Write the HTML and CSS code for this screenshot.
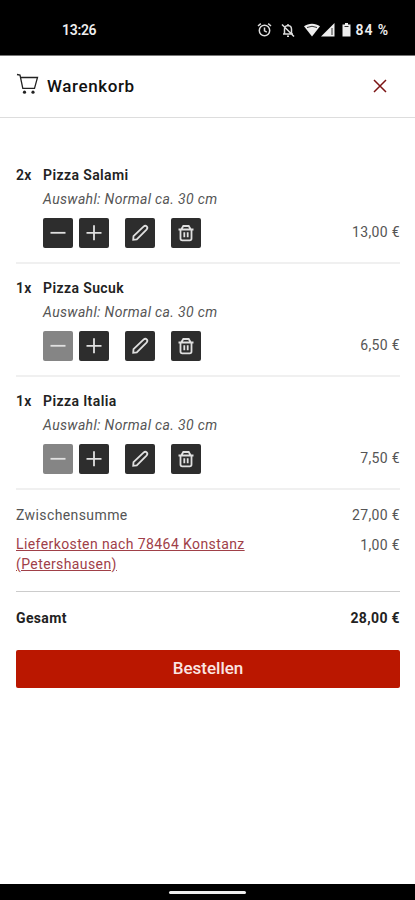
FILE: index.html
```
<!DOCTYPE html>
<html lang="de">
<head>
    <meta charset="UTF-8">
    <meta name="viewport" content="width=device-width, initial-scale=1.0">
    <title>Warenkorb</title>
    <link rel="stylesheet" href="styles.css">
</head>
<body>
    <!-- Icons used by every cart item -->
    <svg class="icon-defs" width="0" height="0">
        <symbol id="minus" viewBox="0 0 30 30"><path d="M7.5 14.8h15"/></symbol>
        <symbol id="plus" viewBox="0 0 30 30"><path d="M7.5 14.8h15M15 7.3v15"/></symbol>
        <symbol id="pencil" viewBox="0 0 30 30">
            <path d="M8.2 21.8l.3-3.600 10-9.600c1.200-1.100 2.500-.9 3.200-.2s.9 2-.2 3.200l-9.700 9.900z"/>
        </symbol>
        <symbol id="trash" viewBox="0 0 30 30">
            <path d="M7.5 11.5h15M10.5 11l1.800-3h5.400l1.800 3M9.500 11.500v9q0 1.800 1.800 1.800h7.400q1.800 0 1.800-1.800v-9M13.300 14.300v5M16.700 14.300v5"/>
        </symbol>
    </svg>

    <!-- Status bar -->
    <div class="status-bar">
        <span class="time">13:26</span>
        <div class="status-icons">
            <svg class="alarm" width="15" height="16" viewBox="0 0 15 16">
                <circle cx="7.5" cy="8.5" r="5.2"/>
                <path d="M7.5 5.5v3.3l2.300 1.300M1 4l2.800-2.400M14 4l-2.800-2.400"/>
            </svg>
            <svg class="bell" width="14" height="16" viewBox="0 0 14 16">
                <path d="M3.500 12V7.200c0-2 1-3.500 3.500-3.700 2.500.2 3.500 1.700 3.500 3.700V12M2 12h10M7 2v1.500M6 14.200h2M1 2.500l12 12"/>
            </svg>
            <svg class="wifi" width="16" height="16" viewBox="0 0 16 16">
                <path class="solid" d="M0 4.300C4.500.800 11.500.800 16 4.300L8 14.500z"/>
                <path class="cut" d="M3 5.500q5-2.500 10 0"/>
            </svg>
            <svg class="signal" width="14" height="16" viewBox="0 0 14 16">
                <path class="solid" d="M0 14.500L13.500 1v13.500z"/>
                <path class="cut" d="M11 6v7"/>
            </svg>
            <svg class="battery" width="9" height="16" viewBox="0 0 8 16">
                <path class="solid" d="M2.500 1h3v1.500H8v12H0v-12h2.500z"/>
                <path class="cut" d="M2 4.500h4"/>
            </svg>
            <span class="percent">84 %</span>
        </div>
    </div>

    <!-- Header -->
    <header>
        <svg class="cart-icon" width="24" height="24" viewBox="0 0 24 24">
            <path d="M1 1.500l3 .5 2.800 13.300h11.700l3-10.800H4.500"/>
            <circle cx="8.500" cy="19.200" r="1.600"/>
            <circle cx="17" cy="19.200" r="1.600"/>
        </svg>
        <h1>Warenkorb</h1>
        <svg class="close-icon" width="14" height="14" viewBox="0 0 14 14"><path d="M1 1l12 12M13 1L1 13"/></svg>
    </header>

    <!-- Cart -->
    <main>
        <div class="item">
            <div class="count">2x</div>
            <div class="details">
                <h2>Pizza Salami</h2>
                <p>Auswahl: Normal ca. 30 cm</p>
                <div class="actions">
                    <button aria-label="Weniger"><svg><use href="#minus"/></svg></button>
                    <button aria-label="Mehr"><svg><use href="#plus"/></svg></button>
                    <button class="spaced" aria-label="Bearbeiten"><svg><use href="#pencil"/></svg></button>
                    <button class="spaced" aria-label="Entfernen"><svg><use href="#trash"/></svg></button>
                    <span class="price">13,00 €</span>
                </div>
            </div>
        </div>

        <div class="item">
            <div class="count">1x</div>
            <div class="details">
                <h2>Pizza Sucuk</h2>
                <p>Auswahl: Normal ca. 30 cm</p>
                <div class="actions">
                    <button disabled aria-label="Weniger"><svg><use href="#minus"/></svg></button>
                    <button aria-label="Mehr"><svg><use href="#plus"/></svg></button>
                    <button class="spaced" aria-label="Bearbeiten"><svg><use href="#pencil"/></svg></button>
                    <button class="spaced" aria-label="Entfernen"><svg><use href="#trash"/></svg></button>
                    <span class="price">6,50 €</span>
                </div>
            </div>
        </div>

        <div class="item">
            <div class="count">1x</div>
            <div class="details">
                <h2>Pizza Italia</h2>
                <p>Auswahl: Normal ca. 30 cm</p>
                <div class="actions">
                    <button disabled aria-label="Weniger"><svg><use href="#minus"/></svg></button>
                    <button aria-label="Mehr"><svg><use href="#plus"/></svg></button>
                    <button class="spaced" aria-label="Bearbeiten"><svg><use href="#pencil"/></svg></button>
                    <button class="spaced" aria-label="Entfernen"><svg><use href="#trash"/></svg></button>
                    <span class="price">7,50 €</span>
                </div>
            </div>
        </div>

        <div class="sums">
            <div class="row">
                <span class="label">Zwischensumme</span>
                <span>27,00 €</span>
            </div>
            <div class="row">
                <a href="#" class="label">Lieferkosten nach 78464 Konstanz (Petershausen)</a>
                <span>1,00 €</span>
            </div>
        </div>

        <div class="row total">
            <span>Gesamt</span>
            <span>28,00 €</span>
        </div>

        <button class="order">Bestellen</button>
    </main>

    <!-- Navigation bar -->
    <footer><div class="handle"></div></footer>
</body>
</html>
```

FILE: styles.css
```
* {
    box-sizing: border-box;
}

body {
    margin: 0;
    height: 900px;
    display: flex;
    flex-direction: column;
    font-family: Roboto, sans-serif;
    font-size: 14px;
    line-height: 20px;
    letter-spacing: 0.35px;
    color: #555;
    background: #fff;
    overflow: hidden;
}

svg {
    fill: none;
    flex-shrink: 0;
}

.icon-defs {
    display: none;
}

/* Status bar */
.status-bar {
    height: 56px;
    padding: 5px 27px 0 62px;
    display: flex;
    align-items: center;
    justify-content: space-between;
    background: #000;
    border-bottom: 1px solid #777;
    color: #eee;
    font-weight: 600;
    letter-spacing: 0;
}

.time {
    letter-spacing: -0.3px;
}

.percent {
    letter-spacing: 0.9px;
    margin-right: -1px;
}

.status-icons {
    display: flex;
    align-items: center;
}

.status-icons svg {
    stroke: #ddd;
    stroke-width: 1.5;
}

.status-icons .solid {
    fill: #eee;
    stroke: none;
}

.status-icons .cut {
    stroke: #333;
    stroke-width: 1;
}

.bell {
    margin-left: 9px;
}

.wifi {
    margin-left: 9px;
}

.signal {
    margin-left: 1px;
}

.battery {
    margin: 0 4px 0 7px;
}

/* Header */
header {
    height: 62px;
    padding: 0 28px 1px 16px;
    display: flex;
    align-items: center;
    border-bottom: 1px solid #ddd;
}

h1 {
    flex: 1;
    margin: 0 0 0 7px;
    font-size: 17px;
    font-weight: 500;
    letter-spacing: 0.6px;
    color: #111;
}

.cart-icon {
    margin-bottom: 3px;
    stroke: #222;
    stroke-width: 1.3;
}

.cart-icon circle {
    fill: #222;
    stroke: none;
}

.close-icon {
    stroke: #7c1414;
    stroke-width: 1.5;
}

/* Cart items */
main {
    flex: 1;
    padding: 33px 15px 0 16px;
}

.item {
    height: 113px;
    padding-top: 14px;
    display: flex;
    border-bottom: 2px solid #f0f0f0;
}

.count {
    width: 27px;
    font-weight: 600;
    color: #222;
}

.details {
    flex: 1;
}

h2 {
    margin: 0;
    font-size: 14px;
    font-weight: 600;
    line-height: 20px;
    letter-spacing: 0.4px;
    color: #222;
}

.details p {
    margin: 4px 0 9px;
    font-style: italic;
}

.actions {
    display: flex;
    align-items: center;
    gap: 6px;
}

.actions button {
    width: 30px;
    height: 30px;
    padding: 0;
    border: none;
    border-radius: 2px;
    background: #2d2d2d;
}

.actions button:disabled {
    background: #858585;
}

.actions .spaced {
    margin-left: 10px;
}

.actions svg {
    display: block;
    width: 30px;
    height: 30px;
    stroke: #e0e0e0;
    stroke-width: 1.8;
}

.price {
    margin-left: auto;
    padding-bottom: 2px;
}

/* Sums */
.sums {
    height: 102px;
    padding-top: 15px;
    border-bottom: 1px solid #ccc;
}

.row {
    display: flex;
    justify-content: space-between;
}

.sums .row + .row {
    margin-top: 10px;
}

.label {
    letter-spacing: 0.4px;
}

.row a {
    width: 250px;
    line-height: 19.5px;
    color: #a04048;
    text-decoration: underline;
}

.total {
    padding-top: 16px;
    font-weight: 700;
    color: #222;
}

.order {
    display: block;
    width: 100%;
    height: 38px;
    margin-top: 22px;
    padding: 0 0 2px;
    border: none;
    border-radius: 2px;
    background: #ba1700;
    color: #fbe5e2;
    font: 500 17px Roboto, sans-serif;
    letter-spacing: 0;
}

/* Navigation bar */
footer {
    height: 16px;
    display: flex;
    justify-content: center;
    background: #000;
}

.status-icons .battery {
    margin-right: 5px;
}

.handle {
    width: 77px;
    height: 3px;
    margin-top: 7px;
    border-radius: 2px;
    background: #eee;
}
```
